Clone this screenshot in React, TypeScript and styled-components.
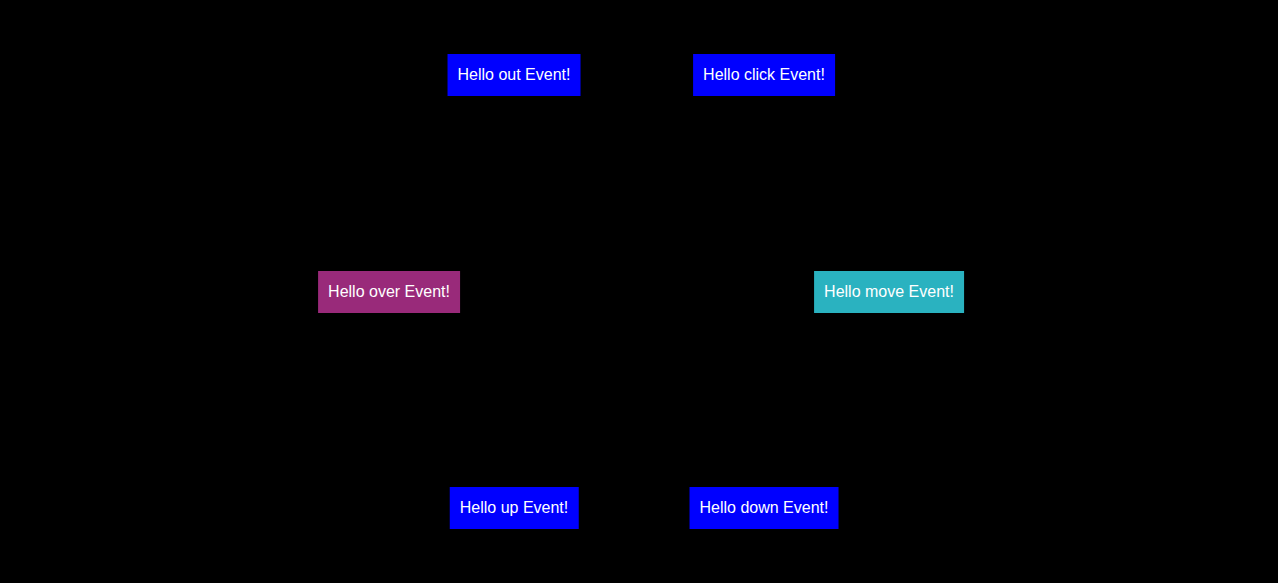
import React from "react";
import styled, { createGlobalStyle } from "styled-components";

const Global = createGlobalStyle`
  html, body { margin: 0; padding: 0; background: #000; }
  body { font-family: "Liberation Sans", Arial, sans-serif; }
`;

const Stage = styled.div`
  position: relative;
  width: 100vw;
  height: 100vh;
  background: #000;
  overflow: hidden;
`;

const Ring = styled.div`
  position: absolute;
  left: 639px;
  top: 291.5px;
  width: 0;
  height: 0;
`;

const Node = styled.div<{ $bg: string }>`
  position: absolute;
  transform: translate(-50%, -50%);
  background: ${(p) => p.$bg};
  color: #fff;
  font-family: "Liberation Sans", Arial, sans-serif;
  font-size: 16px;
  line-height: 18px;
  padding: 12px 10px;
  white-space: nowrap;
`;

const items = [
  { label: "Hello out Event!", angle: 240, bg: "#0000ff" },
  { label: "Hello click Event!", angle: 300, bg: "#0000ff" },
  { label: "Hello move Event!", angle: 0, bg: "#2ab2c0" },
  { label: "Hello down Event!", angle: 60, bg: "#0000ff" },
  { label: "Hello up Event!", angle: 120, bg: "#0000ff" },
  { label: "Hello over Event!", angle: 180, bg: "#992a7a" },
];

export default function App() {
  const r = 250;
  return (
    <>
      <Global />
      <Stage>
        <Ring>
          {items.map((it) => {
            const a = (it.angle * Math.PI) / 180;
            return (
              <Node
                key={it.label}
                $bg={it.bg}
                style={{ left: r * Math.cos(a), top: r * Math.sin(a) }}
              >
                {it.label}
              </Node>
            );
          })}
        </Ring>
      </Stage>
    </>
  );
}
